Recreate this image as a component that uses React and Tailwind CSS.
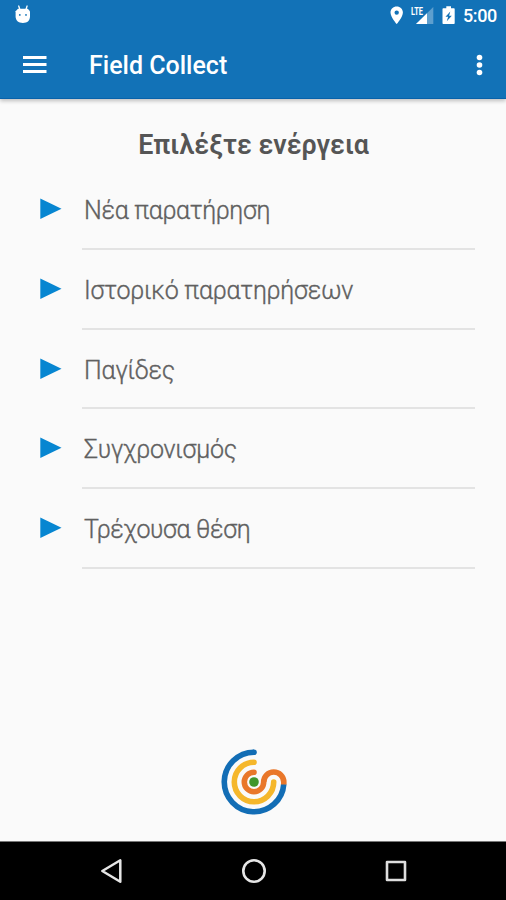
const actions = [
  { label: 'Νέα παρατήρηση', tracking: 'tracking-[-0.35px]' },
  { label: 'Ιστορικό παρατηρήσεων', tracking: 'tracking-[-0.23px]' },
  { label: 'Παγίδες', tracking: 'tracking-[-0.2px]' },
  { label: 'Συγχρονισμός', tracking: 'tracking-[-0.2px]' },
  { label: 'Τρέχουσα θέση', tracking: 'tracking-[-0.38px]' },
];

function StatusBar() {
  return (
    <div className="flex h-8 items-start justify-between pl-[14px] pr-[9px] text-white">
      <svg className="mt-[5px]" width="18" height="19" viewBox="0 0 18 19" fill="none">
        <path d="M4.7 1 6 5M13.1 1 11.8 5" stroke="white" strokeWidth="1.3" strokeLinecap="round" />
        <path d="M4 3.8h9.8l2.2 2.5v5c0 4.2-2.5 6.7-7.1 6.7S1.6 15.5 1.6 11.3v-5z" fill="white" />
        <circle cx="5.8" cy="9.9" r="0.9" fill="#1272b7" />
        <circle cx="12" cy="9.9" r="0.9" fill="#1272b7" />
      </svg>
      <div className="flex items-start">
        <svg className="mt-[6px]" width="72" height="19" viewBox="0 0 72 19" fill="white">
          <path fillRule="evenodd" d="M6.7.5C3.2.5.5 3.1.5 6.5c0 4.5 6.2 11.6 6.2 11.6s6.2-7.1 6.2-11.6c0-3.4-2.7-6-6.2-6Zm0 3.9a2.2 2.2 0 1 1 0 4.4 2.2 2.2 0 0 1 0-4.4Z" />
          <path d="M43.3 1v17H26z" fillOpacity=".32" />
          <path d="M37 7.3V18H26z" />
          <path d="M20.5 0h13v9.5h-13z" fill="#1272b7" />
          <text x="21" y="8.6" fontSize="10.8" fontWeight="700" textLength="12" lengthAdjust="spacingAndGlyphs">LTE</text>
          <path fillRule="evenodd" d="M56.3.3h4.7v1.9h2.7c.6 0 1 .4 1 1v13.9c0 .6-.4 1-1 1H53.5c-.6 0-1-.4-1-1V3.2c0-.6.4-1 1-1h2.8zM60.3 5.5l-4.8 5.2h2.6l-1.3 4.5 5-5.4h-2.7z" />
        </svg>
        <span className="ml-[1px] mt-[5px] w-[34px] whitespace-nowrap text-[18px] font-medium leading-[21px] tracking-[-0.4px]">5:00</span>
      </div>
    </div>
  );
}

function Logo() {
  return (
    <svg width="68" height="68" viewBox="0 0 68 68" fill="none" strokeWidth="5.6" strokeLinecap="round">
      <path d="M34 4.2A29.8 29.8 0 1 0 63.8 36" stroke="#126db5" strokeLinecap="butt" />
      <circle cx="34" cy="4.2" r="2.8" fill="#126db5" stroke="none" />
      <path d="M34 14.3A19.7 19.7 0 1 0 53.7 34" stroke="#f5b72b" />
      <path d="M34 24.3A9.7 9.7 0 1 0 43.7 34" stroke="#e9772a" />
      <path d="M43.7 34A10.05 10.05 0 0 1 63.8 34V36.5" stroke="#e9772a" strokeLinecap="butt" />
      <circle cx="34" cy="34" r="4.8" fill="#40962b" />
    </svg>
  );
}

export default function App() {
  return (
    <div className="flex h-[900px] w-[506px] flex-col overflow-hidden bg-[#fafafa] font-['Roboto',sans-serif]">
      <header className="z-10 h-[99px] shrink-0 border-b border-[#0862aa] bg-[#1272b7] shadow-[0_2px_4px_rgba(0,0,0,0.24)]">
        <StatusBar />
        <div className="flex h-[66px] items-center pl-[23px] pr-[23px] text-white">
          <svg width="24" height="18" viewBox="0 0 24 18" fill="white">
            <path d="M0 0h23.5v3H0zM0 7h23.5v3H0zM0 14h23.5v3H0z" />
          </svg>
          <h1 className="ml-[42px] flex-1 pt-[2px] text-[25px] font-medium leading-8">Field Collect</h1>
          <svg width="7" height="22" viewBox="0 0 7 22" fill="white">
            <circle cx="3.5" cy="3.5" r="2.8" />
            <circle cx="3.5" cy="11" r="2.8" />
            <circle cx="3.5" cy="18.5" r="2.8" />
          </svg>
        </div>
      </header>

      <main className="flex flex-1 flex-col">
        <h2 className="mt-[30px] pl-[1px] text-center text-[26.8px] font-semibold leading-8 text-[#555]">Επιλέξτε ενέργεια</h2>
        <ul className="mt-[9.3px] pl-[40px] pr-[31px]">
          {actions.map((action) => (
            <li key={action.label} className="flex h-[79.7px] items-stretch">
              <svg className="mt-[28px] shrink-0" width="22" height="22" viewBox="0 0 22 22">
                <path d="M.3.5v20.5L21.5 10.8z" fill="#0786d1" />
              </svg>
              <div className="ml-[20px] flex-1 border-b-2 border-[#e3e3e3] pl-[2px] pt-[25px]">
                <span className={'block whitespace-nowrap text-[25px] font-light leading-8 text-[#606060] [-webkit-text-stroke:0.35px_#606060] ' + action.tracking}>{action.label}</span>
              </div>
            </li>
          ))}
        </ul>
        <div className="mb-[25px] mt-auto flex justify-center pl-[1px]">
          <Logo />
        </div>
      </main>

      <nav className="flex h-[59px] shrink-0 items-center justify-between border-t border-[#777] bg-black pl-[100px] pr-[99px]">
        <svg width="24" height="26" viewBox="0 0 24 26" fill="none" stroke="#e6e6e6" strokeWidth="2.5" strokeLinejoin="round">
          <path d="M20.3 2.3v21.4L2.3 13z" />
        </svg>
        <svg className="-ml-[2px]" width="26" height="26" viewBox="0 0 26 26" fill="none" stroke="#e6e6e6" strokeWidth="2.6">
          <circle cx="13" cy="13" r="10.7" />
        </svg>
        <svg width="22" height="22" viewBox="0 0 22 22" fill="none" stroke="#dedede" strokeWidth="2.6" strokeLinejoin="round">
          <path d="M2 2h18v18H2z" />
        </svg>
      </nav>
    </div>
  );
}
